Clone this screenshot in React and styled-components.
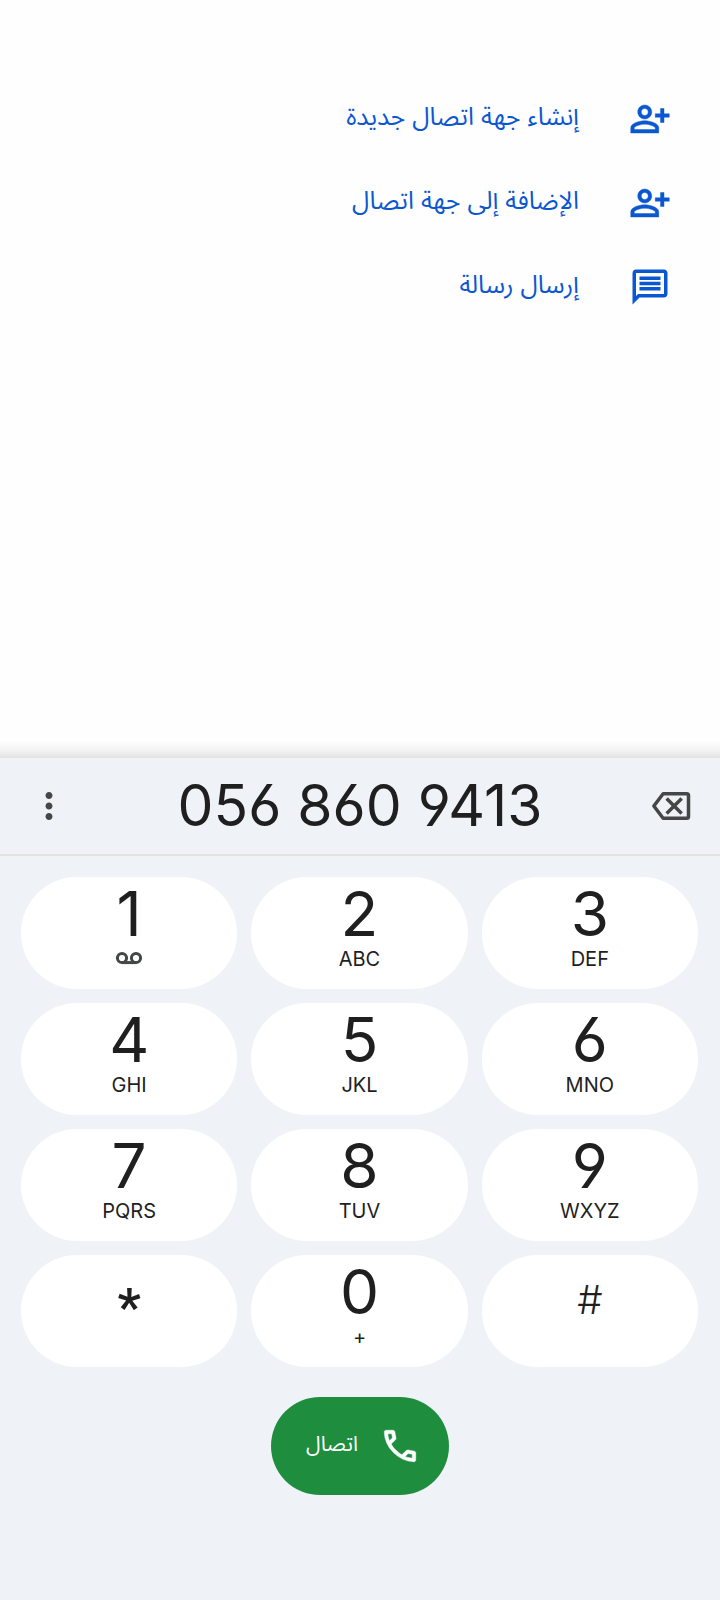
import React, { useState } from 'react';
import styled, { createGlobalStyle } from "styled-components";
import { MdMoreVert, MdOutlineMessage } from "react-icons/md";

const keys = [
    { digit: "1", voicemail: true },
    { digit: "2", letters: "ABC" },
    { digit: "3", letters: "DEF" },
    { digit: "4", letters: "GHI" },
    { digit: "5", letters: "JKL" },
    { digit: "6", letters: "MNO" },
    { digit: "7", letters: "PQRS" },
    { digit: "8", letters: "TUV" },
    { digit: "9", letters: "WXYZ" },
    { digit: "*", symbol: "star" },
    { digit: "0", letters: "+" },
    { digit: "#", symbol: "hash" },
];

const PersonAddIcon = () => (
    <svg viewBox="0 0 24 24" fill="currentColor" stroke="currentColor" strokeWidth="0.25" aria-hidden="true">
        <path d="M20 9V6h-2v3h-3v2h3v3h2v-3h3V9h-3zM9 12c2.21 0 4-1.79 4-4s-1.79-4-4-4-4 1.79-4 4 1.79 4 4 4zm0-6c1.1 0 2 .9 2 2s-.9 2-2 2-2-.9-2-2 .9-2 2-2zm0 7c-2.67 0-8 1.34-8 4v3h16v-3c0-2.66-5.33-4-8-4zm6 5H3v-.99C3.2 16.29 6.3 15 9 15s5.8 1.29 6 2v1z" />
    </svg>
)

const BackspaceIcon = () => (
    <svg viewBox="0 0 24 24" fill="none" stroke="currentColor" strokeWidth="2" aria-hidden="true">
        <path strokeLinejoin="round" d="M7.5 5H21a1 1 0 0 1 1 1v12a1 1 0 0 1-1 1H7.5L2.2 12z" />
        <path d="M9.5 7.7l8.6 8.6M18.1 7.7l-8.6 8.6" />
    </svg>
)

const VoicemailIcon = () => (
    <svg viewBox="0 0 28 14" fill="none" stroke="currentColor" strokeWidth="3" aria-hidden="true">
        <circle cx="7" cy="7" r="4.6" />
        <circle cx="21" cy="7" r="4.6" />
        <path d="M7 11.6h14" />
    </svg>
)

const CallIcon = () => (
    <svg viewBox="0 0 24 24" fill="currentColor" stroke="currentColor" strokeWidth="0.25" aria-hidden="true">
        <path d="M19.95 21q-3.125 0-6.175-1.363T8.225 15.775 4.363 10.225 3 4.05q0-.45.3-.75t.75-.3H8.1q.35 0 .625.238t.325.562l.65 3.5q.05.4-.025.675T9.4 8.45L6.975 10.9q.5.925 1.187 1.787t1.513 1.663q.775.775 1.625 1.438T13.1 17l2.35-2.35q.225-.225.588-.338t.712-.062l3.45.7q.35.1.575.363T21 15.9v4.05q0 .45-.3.75t-.75.3zM6.025 9l1.65-1.65L7.25 5H5.025q.125 1.025.35 2.025T6.025 9zm8.95 8.95q.975.425 1.988.675T19 18.95v-2.2l-2.35-.475z" />
    </svg>
)

const App = () => {

    const [number, setNumber] = useState("056 860 9413")

    const onKeyHandler = (digit) => {
        setNumber((prev) => prev + digit)
    }

    const onDeleteHandler = () => {
        setNumber((prev) => prev.slice(0, -1))
    }

    return (
        <StPage dir="rtl" lang="ar">
            <GlobalStyle />
            <StActions>
                <StAction type="button"><PersonAddIcon /><StLabel>إنشاء جهة اتصال جديدة</StLabel></StAction>
                <StAction type="button"><PersonAddIcon /><StLabel>الإضافة إلى جهة اتصال</StLabel></StAction>
                <StAction type="button"><MdOutlineMessage /><StLabel>إرسال رسالة</StLabel></StAction>
            </StActions>
            <StDialer dir="ltr">
                <StNumberBar>
                    <StIconButton type="button" aria-label="خيارات"><MdMoreVert /></StIconButton>
                    <StNumber
                        type="tel"
                        aria-label="رقم الهاتف"
                        value={number}
                        onChange={(e) => setNumber(e.target.value)}
                    />
                    <StIconButton type="button" aria-label="حذف" onClick={onDeleteHandler}><BackspaceIcon /></StIconButton>
                </StNumberBar>
                <StKeypad>
                    {keys.map((key) => (
                        <StKey key={key.digit} type="button" onClick={() => onKeyHandler(key.digit)}>
                            {key.symbol ? (
                                <StSymbol $star={key.symbol === "star"}>{key.digit}</StSymbol>
                            ) : (
                                <StDigit>{key.digit}</StDigit>
                            )}
                            {key.letters && <StLetters>{key.letters}</StLetters>}
                            {key.voicemail && <StVoicemail><VoicemailIcon /></StVoicemail>}
                        </StKey>
                    ))}
                </StKeypad>
                <StCallButton type="button" dir="rtl"><CallIcon /><StLabel>اتصال</StLabel></StCallButton>
            </StDialer>
        </StPage>
    );
};

export default App;

const GlobalStyle = createGlobalStyle`
    * {
        box-sizing: border-box;
    }
    body {
        margin: 0;
        background-color: #fefefe;
    }
    button, input {
        border: none;
        margin: 0;
        padding: 0;
        background: none;
        color: inherit;
        font-family: inherit;
    }
    button {
        cursor: pointer;
    }
`
const StPage = styled.div`
    min-height: 100vh;
    display: flex;
    flex-direction: column;
    color: #1f1f1f;
    font-family: Inter, "Noto Sans Arabic", "Noto Sans", sans-serif;
`
const StActions = styled.div`
    flex: 1;
    display: flex;
    flex-direction: column;
    padding-top: 77px;
    background-image: linear-gradient(to top, #e2e2e2, #f3f3f3 8px, #fefefe 17px);
`
const StAction = styled.button`
    height: 84px;
    display: flex;
    align-items: center;
    gap: 50px;
    padding: 0 49px;
    color: #0b57d0;
    font-size: 25px;
    svg {
        width: 42px;
        height: 42px;
    }
`
const StLabel = styled.span`
    padding-bottom: 4px;
`
const StDialer = styled.div`
    display: flex;
    flex-direction: column;
    padding-bottom: 105px;
    background-color: #eff3f8;
    font-feature-settings: "cv03", "cv04";
`
const StNumberBar = styled.div`
    height: 98px;
    display: flex;
    align-items: center;
    padding: 0 28px;
    border-bottom: 2px solid #e1e3e1;
`
const StIconButton = styled.button`
    flex: none;
    width: 42px;
    height: 42px;
    color: #444746;
    svg {
        display: block;
        width: 42px;
        height: 42px;
    }
`
const StNumber = styled.input`
    flex: 1;
    min-width: 0;
    text-align: center;
    font-size: 57px;
    font-feature-settings: inherit;
    line-height: 72px;
    outline: none;
`
const StKeypad = styled.div`
    display: grid;
    grid-template-columns: repeat(3, 1fr);
    gap: 14px;
    padding: 21px 22px 21px 21px;
`
const StKey = styled.button`
    height: 112px;
    display: flex;
    flex-direction: column;
    align-items: center;
    border-radius: 56px;
    padding-top: 7px;
    background-color: #fff;
    font-feature-settings: inherit;
`
const StDigit = styled.span`
    line-height: 60px;
    font-size: 62px;
`
const StSymbol = styled.span`
    line-height: 60px;
    padding-top: ${({ $star }) => ($star ? "16px" : "8px")};
    font-family: ${({ $star }) => ($star ? "Roboto, sans-serif" : "inherit")};
    font-size: ${({ $star }) => ($star ? "52px" : "40px")};
    font-weight: ${({ $star }) => ($star ? 600 : 300)};
`
const StLetters = styled.span`
    line-height: 30px;
    font-size: 20px;
`
const StVoicemail = styled.span`
    color: #444746;
    svg {
        display: block;
        width: 28px;
        height: 28px;
    }
`
const StCallButton = styled.button`
    align-self: center;
    height: 98px;
    display: flex;
    align-items: center;
    gap: 21px;
    margin-top: 9px;
    padding: 0 28px 0 35px;
    border-radius: 49px;
    background-color: #1e8e3e;
    color: #fff;
    font-size: 21px;
    svg {
        width: 42px;
        height: 42px;
    }
`
